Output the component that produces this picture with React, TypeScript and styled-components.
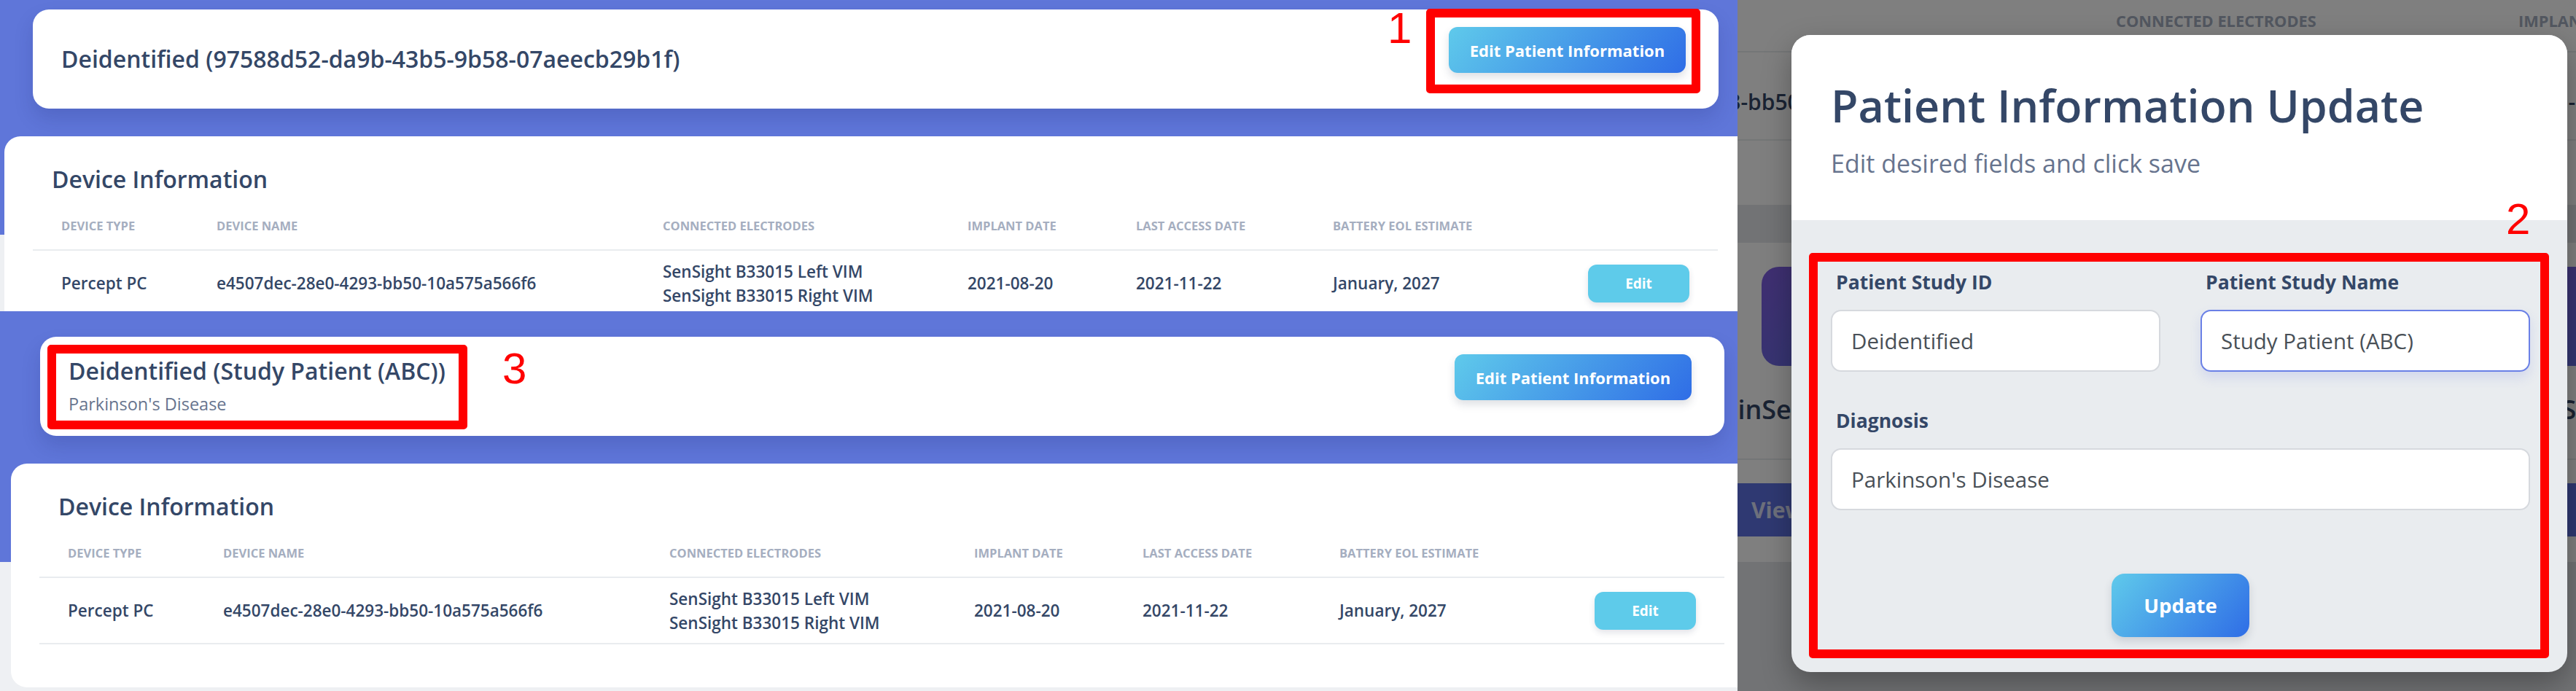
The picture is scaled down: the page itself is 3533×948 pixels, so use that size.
import React from "react";
import styled, { createGlobalStyle } from "styled-components";

const colors = {
  blue: "#5f76d9",
  page: "#eef0f3",
  heading: "#344767",
  muted: "#67748e",
  thead: "#a5aec0",
  line: "#e9ecef",
  info: "#5ecbea",
  red: "#ff0000",
  input: "#495057",
};

const gradient = "linear-gradient(310deg, #2f6de6 0%, #5fcaeb 100%)";

const GlobalStyle = createGlobalStyle`
  html, body {
    margin: 0;
    padding: 0;
  }
  body {
    width: 3533px;
    height: 948px;
    overflow: hidden;
    background: #7f7f7f;
    font-family: "Open Sans", "Noto Sans", sans-serif;
  }
`;

const devices = [
  {
    type: "Percept PC",
    name: "e4507dec-28e0-4293-bb50-10a575a566f6",
    electrodes: ["SenSight B33015 Left VIM", "SenSight B33015 Right VIM"],
    implant: "2021-08-20",
    access: "2021-11-22",
    eol: "January, 2027",
  },
];

const columns = [
  "Device Type",
  "Device Name",
  "Connected Electrodes",
  "Implant Date",
  "Last Access Date",
  "Battery EOL Estimate",
  "",
];

// ---------- left: two dashboard captures stacked ----------

const Canvas = styled.div`
  position: relative;
  display: flex;
  width: 3533px;
  height: 948px;
  overflow: hidden;
`;

const LeftColumn = styled.div`
  display: flex;
  flex-direction: column;
  width: 2383px;
  flex: none;
`;

const Shot = styled.section<{ $height: number }>`
  height: ${({ $height }) => $height}px;
  overflow: hidden;
  background: ${colors.page};
`;

const Hero = styled.div<{ $top: number; $inset: number }>`
  background: ${colors.blue};
  padding: ${({ $top }) => $top}px 0 173px ${({ $inset }) => $inset}px;
`;

const PatientCard = styled.div<{ $width: number }>`
  box-sizing: border-box;
  width: ${({ $width }) => $width}px;
  height: 136px;
  display: flex;
  justify-content: space-between;
  align-items: flex-start;
  padding: 0 45px 0 39px;
  background: #fff;
  border-radius: 22px;
  box-shadow: 0 14px 26px rgba(30, 40, 110, 0.18);
`;

const PatientInfo = styled.div`
  align-self: center;
  display: flex;
  flex-direction: column;
  gap: 10px;
`;

const PatientTitle = styled.h3`
  margin: 0;
  font-size: 32px;
  font-weight: 600;
  line-height: 38px;
  color: ${colors.heading};
  white-space: nowrap;
`;

const PatientSub = styled.p`
  margin: 0;
  font-size: 23.5px;
  line-height: 32px;
  color: ${colors.muted};
  white-space: nowrap;
`;

const GradientButton = styled.button<{ $w: number; $h: number; $size: number; $radius: number }>`
  width: ${({ $w }) => $w}px;
  height: ${({ $h }) => $h}px;
  border: none;
  border-radius: ${({ $radius }) => $radius}px;
  background: ${gradient};
  color: #fff;
  font-family: "Open Sans", sans-serif;
  font-size: ${({ $size }) => $size}px;
  font-weight: 700;
  box-shadow: 0 6px 12px rgba(50, 60, 90, 0.16);
  flex: none;
`;

const HeaderButton = styled(GradientButton)`
  margin-top: 24px;
`;

const DeviceCard = styled.div<{ $inset: number }>`
  box-sizing: border-box;
  width: 2420px;
  margin: -135px 0 0 ${({ $inset }) => $inset}px;
  padding: 40px 0 59px 39px;
  background: #fff;
  border-radius: 22px;
`;

const CardTitle = styled.h5`
  margin: 0 0 12px 26px;
  font-size: 32px;
  font-weight: 600;
  line-height: 38px;
  color: ${colors.heading};
`;

const Table = styled.div`
  display: grid;
  grid-template-columns: 213px 612px 418px 231px 270px 350px 217px;
  width: 2311px;
`;

const HeadCell = styled.div`
  padding: 23px 0 23px 39px;
  font-size: 16.5px;
  font-weight: 700;
  line-height: 19px;
  text-transform: uppercase;
  color: ${colors.thead};
  white-space: nowrap;
  border-bottom: 2px solid ${colors.line};
`;

const Cell = styled.div`
  height: 89px;
  display: flex;
  flex-direction: column;
  justify-content: center;
  padding-left: 39px;
  font-size: 22.5px;
  font-weight: 600;
  line-height: 33px;
  color: ${colors.heading};
  white-space: nowrap;
  border-bottom: 2px solid ${colors.line};
`;

const EditButton = styled.button`
  width: 139px;
  height: 52px;
  border: none;
  border-radius: 12px;
  background: ${colors.info};
  color: #fff;
  font-family: "Open Sans", sans-serif;
  font-size: 19px;
  font-weight: 700;
  box-shadow: 0 4px 8px rgba(50, 60, 90, 0.14);
`;

const DeviceTable: React.FC = () => (
  <Table>
    {columns.map((c, i) => (
      <HeadCell key={i}>{c}</HeadCell>
    ))}
    {devices.map((d) => (
      <React.Fragment key={d.name}>
        <Cell>{d.type}</Cell>
        <Cell>{d.name}</Cell>
        <Cell>
          {d.electrodes.map((e) => (
            <span key={e}>{e}</span>
          ))}
        </Cell>
        <Cell>{d.implant}</Cell>
        <Cell>{d.access}</Cell>
        <Cell>{d.eol}</Cell>
        <Cell>
          <EditButton>Edit</EditButton>
        </Cell>
      </React.Fragment>
    ))}
  </Table>
);

type CaptureProps = {
  height: number;
  top: number;
  inset: number;
  cardWidth: number;
  deviceInset: number;
  title: string;
  subtitle?: string;
};

const Capture: React.FC<CaptureProps> = ({ height, top, inset, cardWidth, deviceInset, title, subtitle }) => (
  <Shot $height={height}>
    <Hero $top={top} $inset={inset}>
      <PatientCard $width={cardWidth}>
        <PatientInfo>
          <PatientTitle>{title}</PatientTitle>
          {subtitle && <PatientSub>{subtitle}</PatientSub>}
        </PatientInfo>
        <HeaderButton $w={325} $h={63} $size={22} $radius={12}>
          Edit Patient Information
        </HeaderButton>
      </PatientCard>
    </Hero>
    <DeviceCard $inset={deviceInset}>
      <CardTitle>Device Information</CardTitle>
      <DeviceTable />
    </DeviceCard>
  </Shot>
);

// ---------- right: modal capture ----------

const ModalShot = styled.section`
  position: relative;
  width: 1150px;
  height: 948px;
  flex: none;
  overflow: hidden;
  background: #e5e7ea;
`;

const Underlay = styled.div`
  display: flex;
  flex-direction: column;
`;

const BgTableCard = styled.div`
  height: 281px;
  overflow: hidden;
  background: #fff;
`;

const BgTable = styled.div`
  display: grid;
  grid-template-columns: 281px 808px 552px 305px 356px 462px 286px;
  width: 3050px;
  margin: -13px 0 0 -621px;
`;

const BgHead = styled.div`
  padding: 29px 0 29px 51px;
  font-size: 21.8px;
  font-weight: 700;
  line-height: 25px;
  text-transform: uppercase;
  color: ${colors.thead};
  white-space: nowrap;
  border-bottom: 2px solid ${colors.line};
`;

const BgCell = styled.div`
  box-sizing: border-box;
  height: 121px;
  display: flex;
  align-items: center;
  padding: 16px 0 0 51px;
  font-size: 30px;
  font-weight: 600;
  color: ${colors.heading};
  white-space: nowrap;
  border-bottom: 2px solid ${colors.line};
`;

const Band = styled.div`
  height: 52px;
`;

const FeatureCard = styled.div`
  height: 438px;
  overflow: hidden;
  background: #fff;
`;

const FeatureRow = styled.div`
  display: flex;
  gap: 30px;
  margin-left: -399px;
  padding-top: 33px;
`;

const Tile = styled.div`
  width: 1000px;
  flex: none;
  display: flex;
  flex-direction: column;
  align-items: center;
`;

const TileIcon = styled.div`
  width: 136px;
  height: 136px;
  border-radius: 24px;
  background: linear-gradient(310deg, #5e72e4 0%, #825ee4 100%);
`;

const TileName = styled.div`
  margin-top: 38px;
  font-size: 36px;
  font-weight: 600;
  line-height: 44px;
  color: ${colors.heading};
  white-space: nowrap;
`;

const TileRule = styled.div`
  align-self: stretch;
  margin-top: 45px;
  border-top: 2px solid ${colors.line};
`;

const TileBar = styled.div`
  align-self: stretch;
  height: 73px;
  margin-top: 32px;
  display: flex;
  align-items: center;
  padding-left: 418px;
  background: #5e72e4;
  color: rgba(255, 255, 255, 0.8);
  font-size: 30px;
  font-weight: 700;
`;

const Backdrop = styled.div`
  position: absolute;
  inset: 0;
  background: rgba(0, 0, 0, 0.5);
`;

const Modal = styled.div`
  position: absolute;
  left: 74px;
  top: 48px;
  width: 1064px;
  height: 874px;
  display: flex;
  flex-direction: column;
  border-radius: 26px;
  overflow: hidden;
  background: #e9ecef;
  box-shadow: 0 16px 40px rgba(0, 0, 0, 0.3);
`;

const ModalHeader = styled.div`
  box-sizing: border-box;
  height: 254px;
  padding: 60px 54px 0;
  background: #fff;
`;

const ModalTitle = styled.h2`
  margin: 0;
  font-size: 61px;
  font-weight: 600;
  line-height: 73px;
  color: ${colors.heading};
  white-space: nowrap;
`;

const ModalSub = styled.p`
  margin: 18px 0 0;
  font-size: 34px;
  line-height: 51px;
  color: ${colors.muted};
`;

const ModalBody = styled.div`
  flex: 1;
  display: flex;
  flex-direction: column;
  padding: 69px 51px 0 54px;
`;

const FieldGrid = styled.div`
  display: grid;
  grid-template-columns: 1fr 1fr;
  column-gap: 55px;
`;

const Field = styled.div<{ $wide?: boolean }>`
  display: flex;
  flex-direction: column;
  gap: 22px;
  grid-column: ${({ $wide }) => ($wide ? "1 / -1" : "auto")};
  margin-top: ${({ $wide }) => ($wide ? "51px" : "0")};
`;

const Label = styled.label`
  margin-left: 7px;
  font-size: 26.5px;
  font-weight: 700;
  line-height: 32px;
  color: ${colors.heading};
`;

const Input = styled.div<{ $focus?: boolean }>`
  box-sizing: border-box;
  height: 85px;
  display: flex;
  align-items: center;
  padding: 0 26px;
  background: #fff;
  border: ${({ $focus }) => ($focus ? "2px solid #6a80e6" : "2px solid #d6d9de")};
  border-radius: 14px;
  box-shadow: ${({ $focus }) => ($focus ? "0 8px 16px rgba(94, 114, 228, 0.16)" : "none")};
  font-size: 29.5px;
  color: ${colors.input};
  white-space: nowrap;
`;

const Actions = styled.div`
  display: flex;
  justify-content: center;
  margin-top: 87px;
`;

// ---------- red annotations ----------

const Marker = styled.div<{ $x: number; $y: number; $w: number; $h: number }>`
  position: absolute;
  left: ${({ $x }) => $x}px;
  top: ${({ $y }) => $y}px;
  width: ${({ $w }) => $w}px;
  height: ${({ $h }) => $h}px;
  box-sizing: border-box;
  border: 12px solid ${colors.red};
  border-radius: 5px;
  pointer-events: none;
`;

const Tag = styled.span<{ $x: number; $y: number }>`
  position: absolute;
  left: ${({ $x }) => $x}px;
  top: ${({ $y }) => $y}px;
  font-family: "Liberation Sans", Arial, sans-serif;
  font-size: 60px;
  line-height: 1;
  color: ${colors.red};
`;

const App: React.FC = () => {
  return (
    <>
      <GlobalStyle />
      <Canvas>
        <LeftColumn>
          <Capture
            height={427}
            top={13}
            inset={45}
            cardWidth={2312}
            deviceInset={6}
            title="Deidentified (97588d52-da9b-43b5-9b58-07aeecb29b1f)"
          />
          <Capture
            height={521}
            top={35}
            inset={55}
            cardWidth={2310}
            deviceInset={15}
            title="Deidentified (Study Patient (ABC))"
            subtitle="Parkinson's Disease"
          />
        </LeftColumn>

        <ModalShot>
          <Underlay>
            <BgTableCard>
              <BgTable>
                {columns.map((c, i) => (
                  <BgHead key={i}>{c}</BgHead>
                ))}
                <BgCell>Percept PC</BgCell>
                <BgCell>e4507dec-28e0-4293-bb50-10a575a566f6</BgCell>
                <BgCell>SenSight B33015 Left VIM</BgCell>
                <BgCell>2021-08-20</BgCell>
                <BgCell>2021-11-22</BgCell>
                <BgCell>January, 2027</BgCell>
                <BgCell />
              </BgTable>
            </BgTableCard>
            <Band />
            <FeatureCard>
              <FeatureRow>
                <Tile>
                  <TileIcon />
                  <TileName>BrainSense Survey</TileName>
                  <TileRule />
                  <TileBar>View</TileBar>
                </Tile>
                <Tile>
                  <TileIcon />
                  <TileName>Indefinite Streaming</TileName>
                  <TileRule />
                  <TileBar>View</TileBar>
                </Tile>
              </FeatureRow>
            </FeatureCard>
          </Underlay>
          <Backdrop />
          <Modal>
            <ModalHeader>
              <ModalTitle>Patient Information Update</ModalTitle>
              <ModalSub>Edit desired fields and click save</ModalSub>
            </ModalHeader>
            <ModalBody>
              <FieldGrid>
                <Field>
                  <Label>Patient Study ID</Label>
                  <Input>Deidentified</Input>
                </Field>
                <Field>
                  <Label>Patient Study Name</Label>
                  <Input $focus>Study Patient (ABC)</Input>
                </Field>
                <Field $wide>
                  <Label>Diagnosis</Label>
                  <Input>Parkinson's Disease</Input>
                </Field>
              </FieldGrid>
              <Actions>
                <GradientButton $w={189} $h={87} $size={27.5} $radius={18}>
                  Update
                </GradientButton>
              </Actions>
            </ModalBody>
          </Modal>
        </ModalShot>

        <Marker $x={1956} $y={12} $w={376} $h={116} />
        <Tag $x={1903} $y={9}>1</Tag>
        <Marker $x={65} $y={473} $w={576} $h={116} />
        <Tag $x={689} $y={476}>3</Tag>
        <Marker $x={2481} $y={347} $w={1015} $h={556} />
        <Tag $x={3437} $y={271}>2</Tag>
      </Canvas>
    </>
  );
};

export default App;
